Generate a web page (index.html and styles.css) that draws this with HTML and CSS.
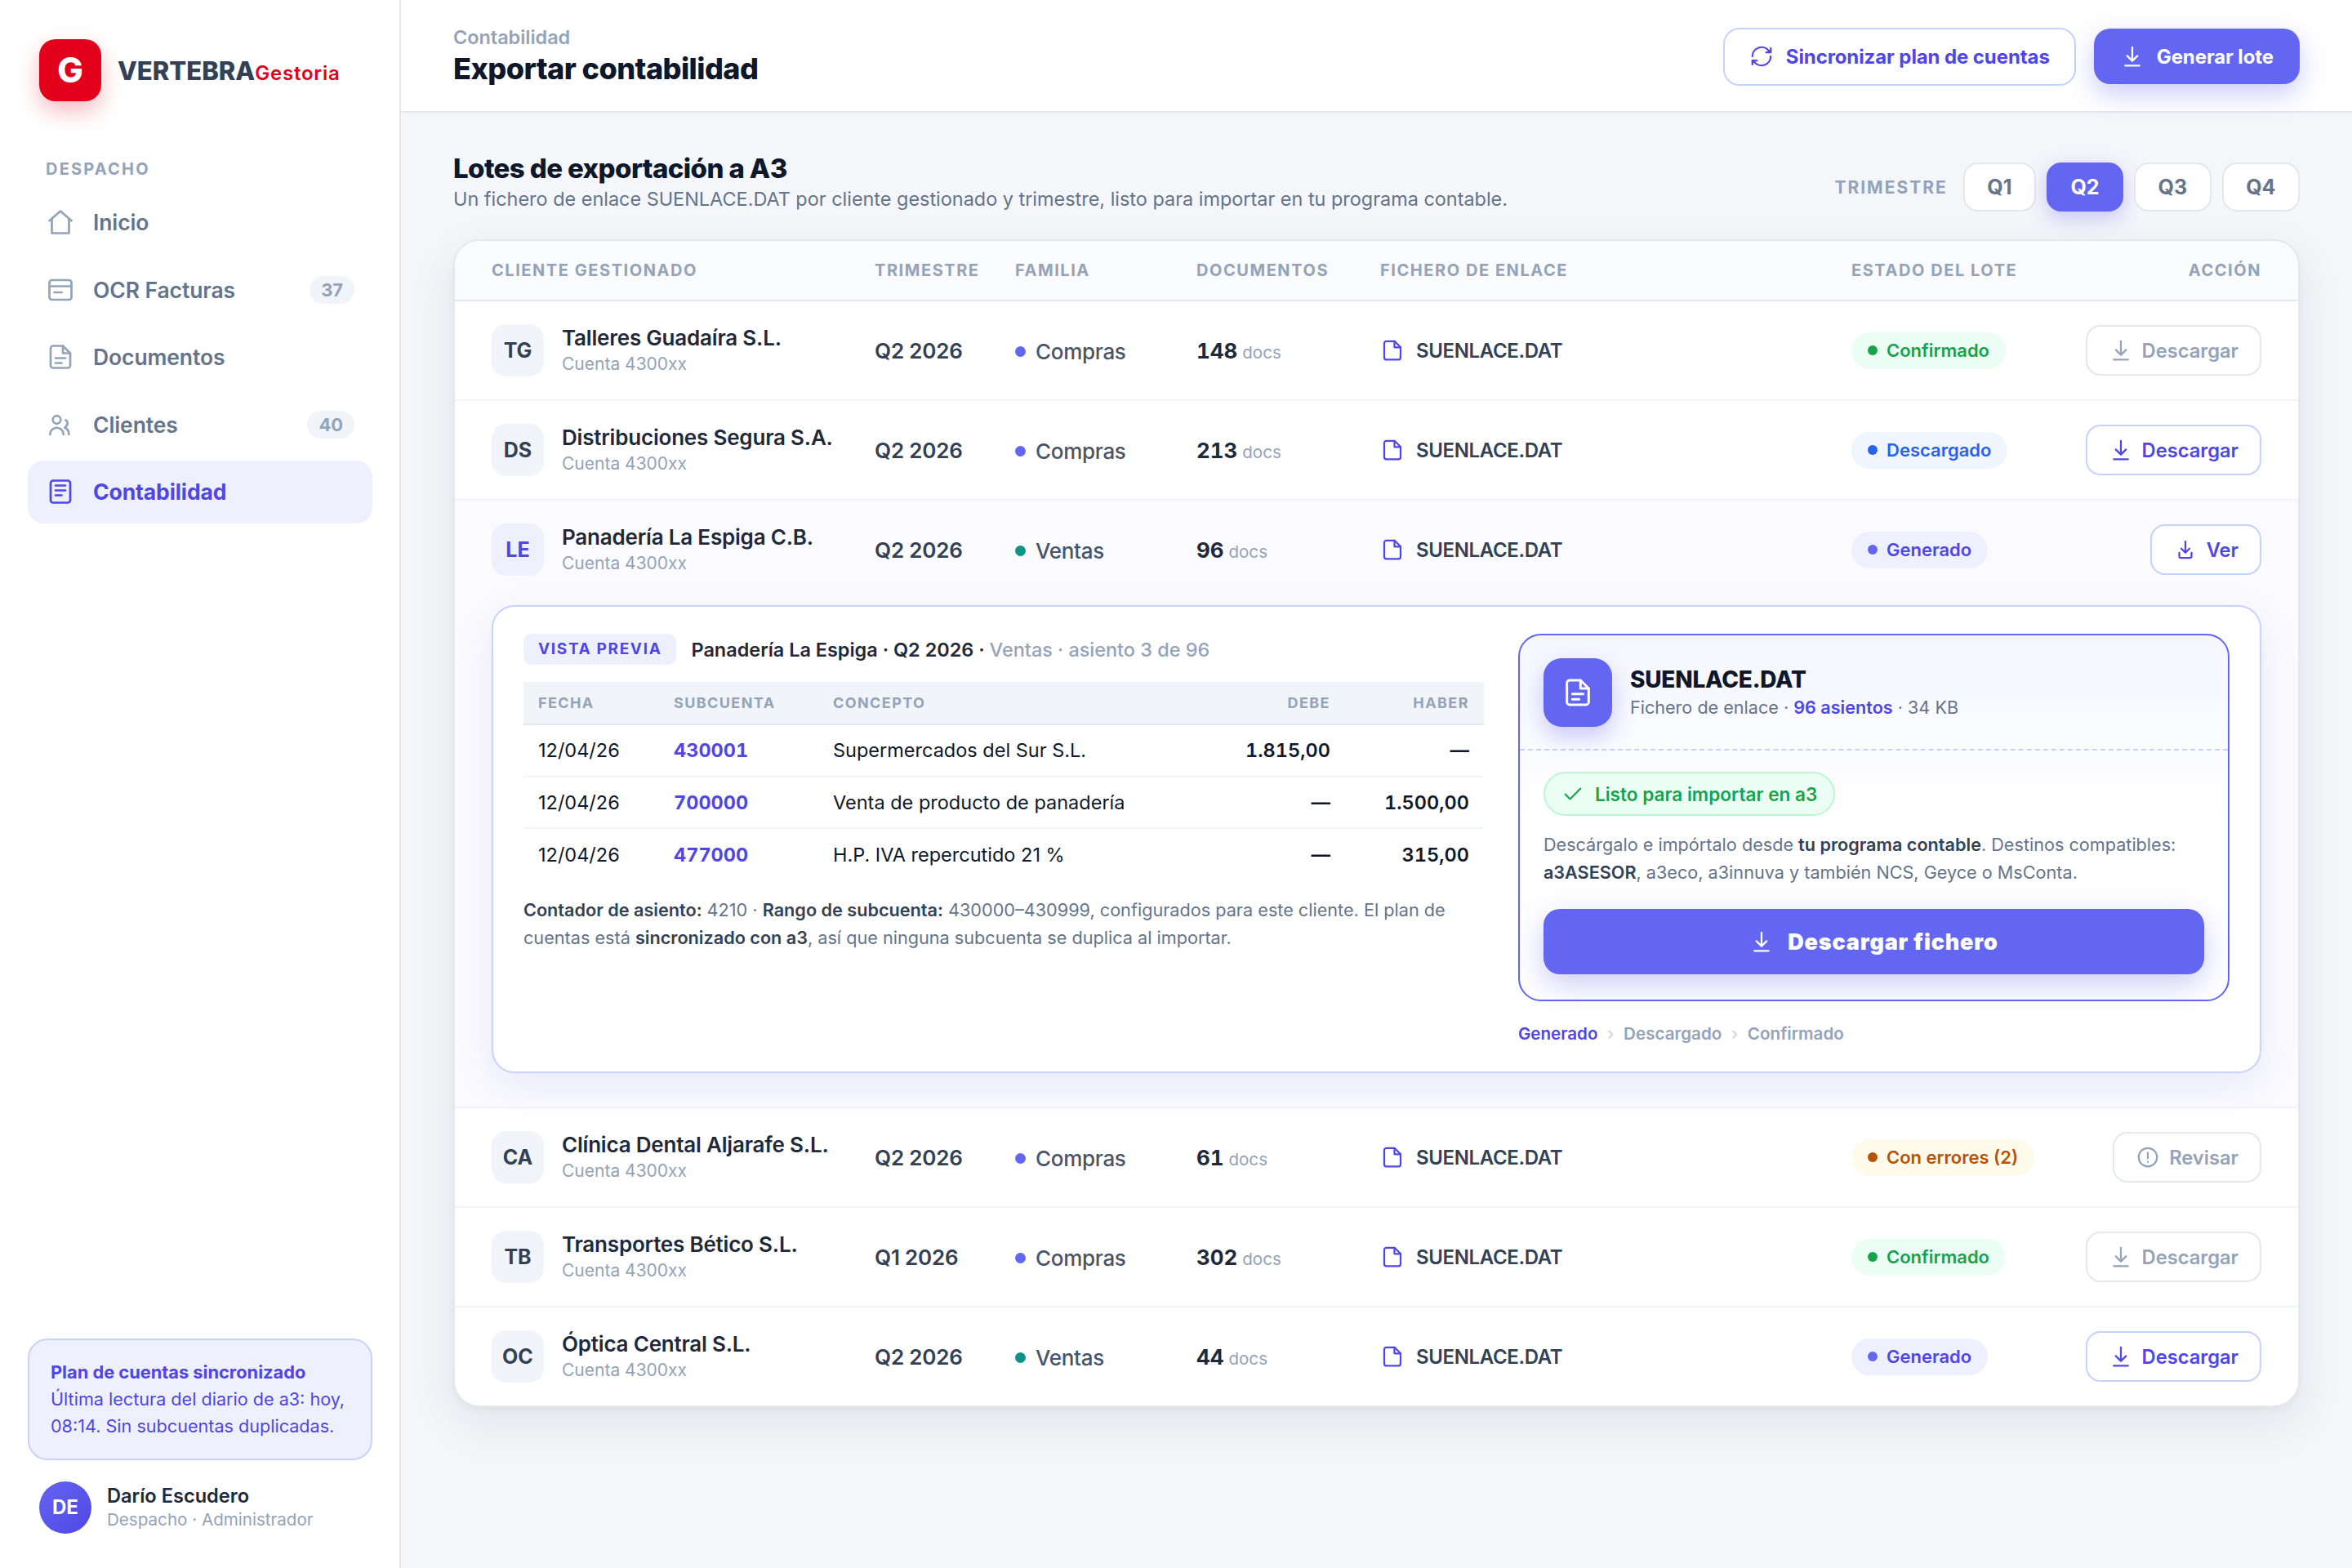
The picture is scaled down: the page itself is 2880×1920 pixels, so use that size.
FILE: index.html
```html
<!DOCTYPE html>
<html lang="es">
<head>
    <meta charset="UTF-8">
    <meta name="viewport" content="width=device-width, initial-scale=1.0">
    <title>Exportar contabilidad</title>
    <link rel="stylesheet" href="styles.css">
</head>
<body>

<!-- Icons -->
<svg class="sprite" width="0" height="0">
  <symbol id="i-home" viewBox="0 0 24 24"><path d="M3 10.8 12 3l9 7.8"/><path d="M5 9.5V21h14V9.5"/></symbol>
  <symbol id="i-ocr" viewBox="0 0 24 24"><rect x="3" y="4" width="18" height="16" rx="2"/><path d="M3 9h18M7 14h6"/></symbol>
  <symbol id="i-doc" viewBox="0 0 24 24"><path d="M14 3H6a2 2 0 0 0-2 2v14a2 2 0 0 0 2 2h12a2 2 0 0 0 2-2V9z"/><path d="M14 3v6h6M8 13h8M8 17h5"/></symbol>
  <symbol id="i-users" viewBox="0 0 24 24"><circle cx="9" cy="8" r="3.2"/><path d="M3.5 20a5.5 5.5 0 0 1 11 0M16.3 8.3a3 3 0 0 1 0 5.2M15.5 14.6c2.2.5 3.4 2.8 3.4 5.4"/></symbol>
  <symbol id="i-book" viewBox="0 0 24 24"><rect x="4" y="3" width="16" height="18" rx="2"/><path d="M8 7h8M8 11h8M8 15h5"/></symbol>
  <symbol id="i-sync" viewBox="0 0 24 24"><path d="M3 12a9 9 0 0 1 16-5.6L21 8M21 4v4h-4.5M21 12a9 9 0 0 1-16 5.6L3 16M3 20v-4h4.5"/></symbol>
  <symbol id="i-down" viewBox="0 0 24 24"><path d="M12 3v13M7 11.5l5 5 5-5M5 21h14"/></symbol>
  <symbol id="i-tray" viewBox="0 0 24 24"><path d="M12 4v11M8 11l4 4 4-4M6 15v3.5A1.5 1.5 0 0 0 7.5 20h9a1.5 1.5 0 0 0 1.5-1.5V15"/></symbol>
  <symbol id="i-file" viewBox="0 0 24 24"><path d="M14 3H6a2 2 0 0 0-2 2v14a2 2 0 0 0 2 2h12a2 2 0 0 0 2-2V9z"/><path d="M14 3v6h6"/></symbol>
  <symbol id="i-alert" viewBox="0 0 24 24"><circle cx="12" cy="12" r="9"/><path d="M12 7.5v5.5M12 16.4v.2"/></symbol>
  <symbol id="i-check" viewBox="0 0 24 24"><path d="M4 12.5l5 5L20 6.5"/></symbol>
</svg>

<div class="app">
  <aside class="sidebar">
    <div class="brand">
      <div class="brand-logo">G</div>
      <div class="brand-name">VERTEBRA<span>Gestoria</span></div>
    </div>

    <div class="nav-title">DESPACHO</div>
    <nav class="nav">
      <a class="nav-item"><svg class="icon"><use href="#i-home"/></svg>Inicio</a>
      <a class="nav-item"><svg class="icon"><use href="#i-ocr"/></svg>OCR Facturas<span class="count">37</span></a>
      <a class="nav-item"><svg class="icon"><use href="#i-doc"/></svg>Documentos</a>
      <a class="nav-item"><svg class="icon"><use href="#i-users"/></svg>Clientes<span class="count">40</span></a>
      <a class="nav-item active"><svg class="icon"><use href="#i-book"/></svg>Contabilidad</a>
    </nav>

    <div class="sync-box">
      <b>Plan de cuentas sincronizado</b>
      Última lectura del diario de a3: hoy, 08:14. Sin subcuentas duplicadas.
    </div>
    <div class="user">
      <div class="user-avatar">DE</div>
      <div>
        <div class="user-name">Darío Escudero</div>
        <div class="user-role">Despacho · Administrador</div>
      </div>
    </div>
  </aside>

  <main class="main">
    <header class="topbar">
      <div>
        <div class="crumb">Contabilidad</div>
        <h1>Exportar contabilidad</h1>
      </div>
      <div class="topbar-actions">
        <button class="btn btn-outline"><svg class="icon"><use href="#i-sync"/></svg>Sincronizar plan de cuentas</button>
        <button class="btn btn-primary"><svg class="icon"><use href="#i-down"/></svg>Generar lote</button>
      </div>
    </header>

    <section class="content">
      <div class="section-head">
        <div>
          <h2>Lotes de exportación a A3</h2>
          <p>Un fichero de enlace SUENLACE.DAT por cliente gestionado y trimestre, listo para importar en tu programa contable.</p>
        </div>
        <div class="quarters">
          <span class="quarters-label">TRIMESTRE</span>
          <button class="quarter">Q1</button>
          <button class="quarter active">Q2</button>
          <button class="quarter">Q3</button>
          <button class="quarter">Q4</button>
        </div>
      </div>

      <div class="card">
        <div class="row row-head">
          <div>CLIENTE GESTIONADO</div>
          <div>TRIMESTRE</div>
          <div>FAMILIA</div>
          <div>DOCUMENTOS</div>
          <div>FICHERO DE ENLACE</div>
          <div>ESTADO DEL LOTE</div>
          <div class="action">ACCIÓN</div>
        </div>

        <div class="row">
          <div class="client"><div class="avatar">TG</div><div><div class="client-name">Talleres Guadaíra S.L.</div><div class="client-sub">Cuenta 4300xx</div></div></div>
          <div class="quarter-cell">Q2 2026</div>
          <div class="family">Compras</div>
          <div class="docs"><b>148</b> docs</div>
          <div class="file"><svg class="icon"><use href="#i-file"/></svg>SUENLACE.DAT</div>
          <div><span class="pill ok">Confirmado</span></div>
          <div class="action"><button class="btn-row muted"><svg class="icon"><use href="#i-down"/></svg>Descargar</button></div>
        </div>

        <div class="row">
          <div class="client"><div class="avatar">DS</div><div><div class="client-name">Distribuciones Segura S.A.</div><div class="client-sub">Cuenta 4300xx</div></div></div>
          <div class="quarter-cell">Q2 2026</div>
          <div class="family">Compras</div>
          <div class="docs"><b>213</b> docs</div>
          <div class="file"><svg class="icon"><use href="#i-file"/></svg>SUENLACE.DAT</div>
          <div><span class="pill info">Descargado</span></div>
          <div class="action"><button class="btn-row"><svg class="icon"><use href="#i-down"/></svg>Descargar</button></div>
        </div>

        <!-- Expanded batch -->
        <div class="expanded">
          <div class="row">
            <div class="client"><div class="avatar accent">LE</div><div><div class="client-name">Panadería La Espiga C.B.</div><div class="client-sub">Cuenta 4300xx</div></div></div>
            <div class="quarter-cell">Q2 2026</div>
            <div class="family sales">Ventas</div>
            <div class="docs"><b>96</b> docs</div>
            <div class="file"><svg class="icon"><use href="#i-file"/></svg>SUENLACE.DAT</div>
            <div><span class="pill new">Generado</span></div>
            <div class="action"><button class="btn-row"><svg class="icon"><use href="#i-tray"/></svg>Ver</button></div>
          </div>

          <div class="preview">
            <div class="preview-left">
              <div class="preview-title">
                <span class="tag">VISTA PREVIA</span>
                <span>Panadería La Espiga · Q2 2026 · <em>Ventas · asiento 3 de 96</em></span>
              </div>
              <table class="entries">
                <thead>
                  <tr><th class="c-date">FECHA</th><th class="c-acc">SUBCUENTA</th><th>CONCEPTO</th><th class="c-debit">DEBE</th><th class="c-credit">HABER</th></tr>
                </thead>
                <tbody>
                  <tr><td>12/04/26</td><td class="acc">430001</td><td>Supermercados del Sur S.L.</td><td class="num">1.815,00</td><td class="num">—</td></tr>
                  <tr><td>12/04/26</td><td class="acc">700000</td><td>Venta de producto de panadería</td><td class="num">—</td><td class="num">1.500,00</td></tr>
                  <tr><td>12/04/26</td><td class="acc">477000</td><td>H.P. IVA repercutido 21 %</td><td class="num">—</td><td class="num">315,00</td></tr>
                </tbody>
              </table>
              <p class="note"><b>Contador de asiento:</b> 4210 · <b>Rango de subcuenta:</b> 430000–430999, configurados para este cliente. El plan de cuentas está <b>sincronizado con a3</b>, así que ninguna subcuenta se duplica al importar.</p>
            </div>

            <div class="preview-right">
              <div class="ticket">
                <div class="ticket-head">
                  <div class="ticket-icon"><svg class="icon"><use href="#i-doc"/></svg></div>
                  <div>
                    <div class="ticket-name">SUENLACE.DAT</div>
                    <div class="ticket-meta">Fichero de enlace · <b>96 asientos</b> · 34 KB</div>
                  </div>
                </div>
                <div class="ticket-body">
                  <span class="ready"><svg class="icon"><use href="#i-check"/></svg>Listo para importar en a3</span>
                  <p>Descárgalo e impórtalo desde <b>tu programa contable</b>. Destinos compatibles: <b>a3ASESOR</b>, a3eco, a3innuva y también NCS, Geyce o MsConta.</p>
                  <button class="btn-download"><svg class="icon"><use href="#i-down"/></svg>Descargar fichero</button>
                </div>
              </div>
              <div class="steps"><span class="on">Generado</span><i>›</i><span>Descargado</span><i>›</i><span>Confirmado</span></div>
            </div>
          </div>
        </div>

        <div class="row">
          <div class="client"><div class="avatar">CA</div><div><div class="client-name">Clínica Dental Aljarafe S.L.</div><div class="client-sub">Cuenta 4300xx</div></div></div>
          <div class="quarter-cell">Q2 2026</div>
          <div class="family">Compras</div>
          <div class="docs"><b>61</b> docs</div>
          <div class="file"><svg class="icon"><use href="#i-file"/></svg>SUENLACE.DAT</div>
          <div><span class="pill warn">Con errores (2)</span></div>
          <div class="action"><button class="btn-row muted"><svg class="icon"><use href="#i-alert"/></svg>Revisar</button></div>
        </div>

        <div class="row">
          <div class="client"><div class="avatar">TB</div><div><div class="client-name">Transportes Bético S.L.</div><div class="client-sub">Cuenta 4300xx</div></div></div>
          <div class="quarter-cell">Q1 2026</div>
          <div class="family">Compras</div>
          <div class="docs"><b>302</b> docs</div>
          <div class="file"><svg class="icon"><use href="#i-file"/></svg>SUENLACE.DAT</div>
          <div><span class="pill ok">Confirmado</span></div>
          <div class="action"><button class="btn-row muted"><svg class="icon"><use href="#i-down"/></svg>Descargar</button></div>
        </div>

        <div class="row">
          <div class="client"><div class="avatar">OC</div><div><div class="client-name">Óptica Central S.L.</div><div class="client-sub">Cuenta 4300xx</div></div></div>
          <div class="quarter-cell">Q2 2026</div>
          <div class="family sales">Ventas</div>
          <div class="docs"><b>44</b> docs</div>
          <div class="file"><svg class="icon"><use href="#i-file"/></svg>SUENLACE.DAT</div>
          <div><span class="pill new">Generado</span></div>
          <div class="action"><button class="btn-row"><svg class="icon"><use href="#i-down"/></svg>Descargar</button></div>
        </div>
      </div>
    </section>
  </main>
</div>

</body>
</html>
```
FILE: styles.css
```css
/* Global styles */

* {
  box-sizing: border-box;
  margin: 0;
  padding: 0;
}

:root {
  --indigo: #6366f1;
  --indigo-dark: #4f46e5;
  --indigo-line: #c7d2fe;
  --indigo-soft: #eef0fd;
  --ink: #0f172a;
  --ink-2: #1e293b;
  --ink-3: #334155;
  --text: #64748b;
  --muted: #94a3b8;
  --line: #e5e7eb;
  --soft: #f1f5f9;
}

body {
  font-family: Inter, "Liberation Sans", sans-serif;
  font-size: 26px;
  color: var(--ink-2);
  background: #f4f6fa;
}

button {
  font-family: inherit;
  cursor: pointer;
}

.sprite {
  display: none;
}

.icon {
  flex: none;
  width: 30px;
  height: 30px;
  fill: none;
  stroke: currentColor;
  stroke-width: 1.8;
  stroke-linecap: round;
  stroke-linejoin: round;
}

.app {
  display: flex;
  height: 1920px;
  overflow: hidden;
}

/* Sidebar */

.sidebar {
  display: flex;
  flex-direction: column;
  flex: none;
  width: 491px;
  padding: 48px 33px 42px 34px;
  background: #fff;
  border-right: 2px solid var(--line);
}

.brand {
  display: flex;
  align-items: center;
  gap: 20px;
  padding-left: 14px;
}

.brand-logo {
  width: 76px;
  height: 76px;
  border-radius: 20px;
  background: #e3001b;
  color: #fff;
  font-size: 42px;
  font-weight: 800;
  line-height: 76px;
  text-align: center;
  box-shadow: 0 12px 28px rgba(227, 0, 27, 0.28);
}

.brand-name {
  color: var(--ink-3);
  font-size: 31px;
  font-weight: 800;
}

.brand-name span {
  color: #e3001b;
  font-size: 24px;
  font-weight: 600;
  letter-spacing: 0.8px;
}

.nav-title {
  margin: 70px 0 14px 22px;
  color: var(--muted);
  font-size: 20px;
  font-weight: 700;
  line-height: 26px;
  letter-spacing: 2.2px;
}

.nav {
  display: flex;
  flex-direction: column;
  gap: 6px;
}

.nav-item {
  display: flex;
  align-items: center;
  gap: 22px;
  height: 76.5px;
  padding: 0 22px;
  border-radius: 20px;
  color: var(--text);
  font-size: 26.5px;
  font-weight: 600;
  letter-spacing: -0.1px;
}

.nav-item .icon {
  width: 36px;
  height: 36px;
  color: var(--muted);
}

.nav-item.active {
  background: var(--indigo-soft);
  color: var(--indigo-dark);
  font-weight: 700;
}

.nav-item.active .icon {
  color: var(--indigo-dark);
}

.count {
  margin-left: auto;
  padding: 0 14px;
  border-radius: 17px;
  background: var(--soft);
  color: var(--muted);
  font-size: 22px;
  font-weight: 700;
  line-height: 34px;
}

.sync-box {
  margin-top: auto;
  padding: 23px 26px;
  border: 2px solid var(--indigo-line);
  border-radius: 24px;
  background: var(--indigo-soft);
  color: var(--indigo-dark);
  font-size: 21.6px;
  line-height: 33px;
}

.sync-box b {
  display: block;
  font-size: 21.8px;
  font-weight: 700;
}

.user {
  display: flex;
  align-items: center;
  gap: 19px;
  margin-top: 26px;
  padding-left: 14px;
}

.user-avatar {
  width: 64px;
  height: 64px;
  border-radius: 50%;
  background: linear-gradient(135deg, var(--indigo), var(--indigo-dark));
  color: #fff;
  font-size: 24px;
  font-weight: 700;
  line-height: 64px;
  text-align: center;
}

.user-name {
  font-size: 23.6px;
  font-weight: 600;
  line-height: 30px;
}

.user-role {
  color: var(--muted);
  font-size: 20.6px;
  line-height: 28px;
}

/* Top bar */

.main {
  flex: 1;
  min-width: 0;
}

.topbar {
  display: flex;
  align-items: center;
  justify-content: space-between;
  height: 138px;
  padding: 2px 64px 0;
  background: #fff;
  border-bottom: 2px solid var(--line);
}

.crumb {
  color: var(--muted);
  font-size: 23.4px;
  font-weight: 600;
  line-height: 30px;
}

h1 {
  color: var(--ink);
  font-size: 36px;
  font-weight: 800;
  line-height: 46px;
  letter-spacing: -0.55px;
}

.topbar-actions {
  display: flex;
  align-items: center;
  gap: 22px;
}

.btn {
  display: flex;
  align-items: center;
  gap: 15px;
  height: 68px;
  padding: 0 32px;
  border: none;
  border-radius: 20px;
  font-size: 24px;
  font-weight: 700;
  letter-spacing: -0.1px;
}

.btn-outline {
  height: 71px;
  padding: 0 30px;
  border: 2px solid var(--indigo-line);
  background: #fff;
  color: var(--indigo-dark);
}

.btn-primary {
  background: var(--indigo);
  color: #fff;
  box-shadow: 0 12px 32px rgba(79, 70, 229, 0.28);
}

/* Section heading */

.content {
  padding: 48px 64px;
}

.section-head {
  display: flex;
  align-items: flex-end;
  justify-content: space-between;
  height: 76px;
  margin-bottom: 31px;
}

h2 {
  color: var(--ink);
  font-size: 33px;
  font-weight: 800;
  line-height: 40px;
  letter-spacing: -0.6px;
}

.section-head p {
  color: var(--text);
  font-size: 23.43px;
  line-height: 36px;
}

.quarters {
  display: flex;
  align-items: center;
  gap: 13px;
  margin-bottom: 3px;
}

.quarters-label {
  margin-right: 6px;
  color: var(--muted);
  font-size: 21px;
  font-weight: 700;
  letter-spacing: 2px;
}

.quarter {
  height: 60px;
  padding: 0 27.5px;
  border: 2px solid var(--line);
  border-radius: 18px;
  background: #fff;
  color: var(--text);
  font-size: 25px;
  font-weight: 700;
}

.quarter.active {
  border-color: var(--indigo);
  background: var(--indigo);
  color: #fff;
  box-shadow: 0 8px 24px rgba(79, 70, 229, 0.28);
}

/* Batches table */

.card {
  border: 2px solid var(--line);
  border-radius: 32px;
  background: #fff;
  box-shadow: 0 20px 60px rgba(15, 23, 42, 0.08), 0 4px 8px rgba(15, 23, 42, 0.04);
}

.row {
  display: grid;
  grid-template-columns: 469px 172px 222px 225px 577px 225px 1fr;
  align-items: center;
  height: 122px;
  padding: 0 45px;
  border-bottom: 2px solid var(--soft);
}

.card > .row:last-child {
  height: 120px;
  border-bottom: none;
}

.card > .row-head {
  height: 74px;
  border-bottom: 2px solid var(--line);
  border-radius: 30px 30px 0 0;
  background: #fafbfd;
  color: var(--muted);
  font-size: 20px;
  font-weight: 700;
  letter-spacing: 1.55px;
}

.action {
  display: flex;
  justify-content: flex-end;
}

.client {
  display: flex;
  align-items: center;
  gap: 22px;
}

.avatar {
  width: 64px;
  height: 64px;
  border-radius: 18px;
  background: var(--soft);
  color: var(--ink-3);
  font-size: 25px;
  font-weight: 700;
  line-height: 64px;
  text-align: center;
}

.avatar.accent {
  background: var(--indigo-soft);
  color: var(--indigo-dark);
}

.client-name {
  font-size: 26px;
  font-weight: 600;
  line-height: 32px;
  letter-spacing: -0.2px;
}

.client-sub {
  color: var(--muted);
  font-size: 21px;
  line-height: 31px;
}

.quarter-cell {
  color: var(--ink-3);
  font-size: 26px;
  font-weight: 600;
  letter-spacing: -0.2px;
}

.family {
  display: flex;
  align-items: center;
  gap: 12px;
  padding-top: 3px;
  color: #475569;
  font-size: 26px;
  font-weight: 500;
  letter-spacing: -0.3px;
}

.family::before {
  content: "";
  width: 13px;
  height: 13px;
  border-radius: 50%;
  background: var(--indigo);
}

.family.sales::before {
  background: #0d9488;
}

.docs {
  color: var(--muted);
  font-size: 20.6px;
}

.docs b {
  color: var(--ink-2);
  font-size: 26px;
  font-weight: 700;
  font-variant-numeric: tabular-nums;
}

.file {
  display: flex;
  align-items: center;
  gap: 14px;
  color: var(--ink-3);
  font-size: 24px;
  font-weight: 600;
  letter-spacing: -0.35px;
}

.file .icon {
  color: var(--indigo-dark);
}

.pill {
  display: inline-flex;
  align-items: center;
  gap: 11px;
  height: 45px;
  padding: 0 20px;
  border-radius: 23px;
  font-size: 22px;
  font-weight: 600;
  white-space: nowrap;
}

.pill::before {
  content: "";
  width: 12px;
  height: 12px;
  border-radius: 50%;
  background: currentColor;
}

.pill.ok {
  background: #ecfdf5;
  color: #16a34a;
}

.pill.info {
  background: #eff6ff;
  color: #2563eb;
}

.pill.new {
  background: var(--indigo-soft);
  color: var(--indigo-dark);
}

.pill.new::before {
  background: var(--indigo);
}

.pill.warn {
  background: #fffbeb;
  color: #b45309;
}

.btn-row {
  display: flex;
  align-items: center;
  gap: 11px;
  height: 62px;
  padding: 0 26px;
  border: 2px solid var(--indigo-line);
  border-radius: 18px;
  background: #fff;
  color: var(--indigo-dark);
  font-size: 23.7px;
  font-weight: 600;
}

.btn-row.muted {
  border-color: var(--line);
  color: var(--muted);
}

/* Expanded row */

.expanded {
  padding-bottom: 41px;
  border-bottom: 2px solid var(--soft);
  background: #fbfbfe;
}

.expanded .row {
  height: 120px;
  border-bottom: none;
}

.preview {
  display: grid;
  grid-template-columns: 1.35fr 1fr;
  gap: 42px;
  height: 573px;
  margin: 8px 45px 0;
  padding: 33px 37px;
  border: 2px solid var(--indigo-line);
  border-radius: 28px;
  background: #fff;
  box-shadow: 0 16px 48px rgba(79, 70, 229, 0.1);
}

.preview-title {
  display: flex;
  align-items: center;
  gap: 18px;
  font-size: 23.45px;
  font-weight: 600;
}

.preview-title em {
  color: var(--muted);
  font-style: normal;
  font-weight: 500;
}

.tag {
  height: 38px;
  padding: 0 18px;
  border-radius: 10px;
  background: var(--indigo-soft);
  color: var(--indigo-dark);
  font-size: 19px;
  font-weight: 700;
  line-height: 38px;
  letter-spacing: 1.65px;
}

.entries {
  width: 100%;
  margin-top: 21px;
  border-collapse: collapse;
  table-layout: fixed;
  color: var(--ink);
  font-size: 23.5px;
}

.entries th {
  height: 52px;
  padding: 0 18px;
  border-bottom: 2px solid var(--line);
  background: var(--soft);
  color: var(--muted);
  font-size: 18px;
  font-weight: 700;
  letter-spacing: 1.4px;
  text-align: left;
}

.entries td {
  height: 63.7px;
  padding: 0 18px;
  border-bottom: 2px solid var(--soft);
}

.entries tr:last-child td {
  border-bottom: none;
}

.entries .c-date {
  width: 166px;
}

.entries .c-acc {
  width: 195px;
}

.entries .c-debit {
  width: 170px;
  text-align: right;
}

.entries .c-credit {
  width: 170px;
  text-align: right;
}

.entries .acc {
  color: var(--indigo-dark);
  font-weight: 700;
  font-variant-numeric: tabular-nums;
}

.entries .num {
  font-weight: 600;
  font-variant-numeric: tabular-nums;
  text-align: right;
}

.note {
  margin-top: 19px;
  color: var(--text);
  font-size: 21.65px;
  line-height: 34px;
}

.note b,
.ticket-body p b {
  color: var(--ink-3);
  font-weight: 600;
}

.ticket {
  height: 450px;
  border: 2px solid var(--indigo);
  border-radius: 28px;
  background: linear-gradient(#f5f6ff, #fff 50%);
}

.ticket-head {
  display: flex;
  align-items: center;
  gap: 22px;
  height: 141px;
  padding: 0 29px;
  border-bottom: 2px dashed var(--indigo-line);
}

.ticket-icon {
  display: flex;
  align-items: center;
  justify-content: center;
  width: 84px;
  height: 84px;
  border-radius: 22px;
  background: var(--indigo);
  color: #fff;
  box-shadow: 0 12px 28px rgba(79, 70, 229, 0.28);
}

.ticket-icon .icon {
  width: 40px;
  height: 40px;
}

.ticket-name {
  color: var(--ink);
  font-size: 28px;
  font-weight: 800;
  line-height: 36px;
  letter-spacing: -0.2px;
}

.ticket-meta {
  color: var(--text);
  font-size: 21.6px;
  line-height: 32px;
}

.ticket-meta b {
  color: var(--indigo-dark);
  font-weight: 600;
}

.ticket-body {
  padding: 26px 29px;
}

.ready {
  display: inline-flex;
  align-items: center;
  gap: 13px;
  height: 54px;
  padding: 0 20px;
  border: 2px solid #bbf7d0;
  border-radius: 27px;
  background: #ecfdf5;
  color: #16a34a;
  font-size: 22.6px;
  font-weight: 600;
}

.ready .icon {
  width: 28px;
  height: 28px;
}

.ticket-body p {
  margin-top: 18px;
  color: var(--text);
  font-size: 21.63px;
  line-height: 34px;
}

.btn-download {
  display: flex;
  align-items: center;
  justify-content: center;
  gap: 17px;
  width: 100%;
  height: 80px;
  margin-top: 28px;
  border: none;
  border-radius: 20px;
  background: var(--indigo);
  color: #fff;
  font-size: 27px;
  font-weight: 900;
  letter-spacing: 0.8px;
  box-shadow: 0 12px 36px rgba(79, 70, 229, 0.28);
}

.steps {
  display: flex;
  gap: 11.5px;
  margin-top: 26px;
  color: var(--muted);
  font-size: 20.6px;
  font-weight: 600;
  line-height: 28px;
}

.steps .on {
  color: var(--indigo-dark);
}

.steps i {
  color: #d5dae3;
  font-style: normal;
}
```
